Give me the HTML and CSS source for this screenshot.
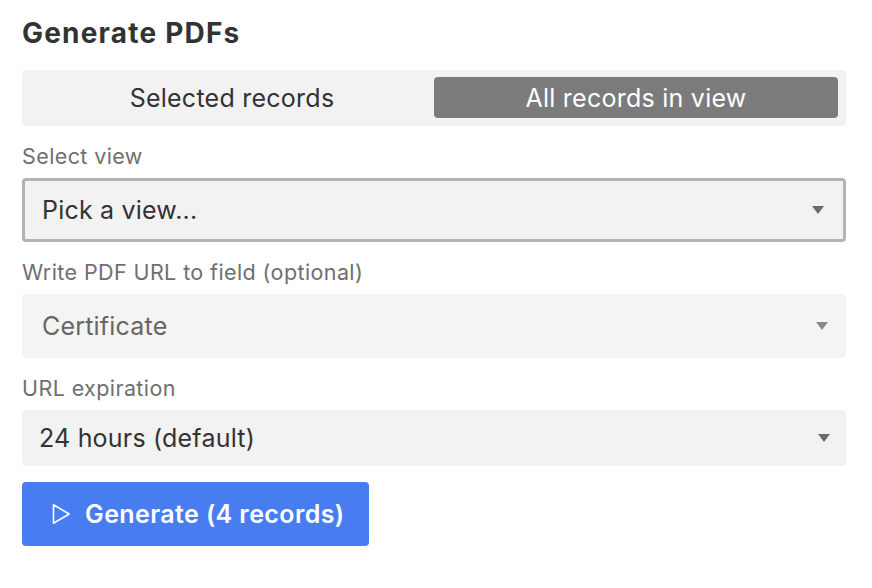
FILE: index.html
```html
<!DOCTYPE html>
<html lang="en">
<head>
<meta charset="utf-8">
<title>Generate PDFs</title>
<link rel="stylesheet" href="styles.css">
</head>
<body>
<div class="panel">
  <h1 class="title">Generate PDFs</h1>
  <div class="segmented">
    <div class="seg-option">Selected records</div>
    <div class="seg-option seg-active">All records in view</div>
  </div>

  <div class="field">
    <div class="label">Select view</div>
    <div class="select select-bordered">
      <span class="select-text">Pick a view...</span>
      <span class="caret"></span>
    </div>
  </div>

  <div class="field">
    <div class="label">Write PDF URL to field (optional)</div>
    <div class="select select-disabled">
      <span class="select-text">Certificate</span>
      <span class="caret caret-light"></span>
    </div>
  </div>

  <div class="field">
    <div class="label">URL expiration</div>
    <div class="select select-plain">
      <span class="select-text">24 hours (default)</span>
      <span class="caret"></span>
    </div>
  </div>

  <button class="generate">
    <svg class="play" width="19" height="22" viewBox="0 0 19 22" aria-hidden="true">
      <path d="M1.5 1.8 L17.2 11 L1.5 20.2 Z" fill="none" stroke="#fff" stroke-width="1.6" stroke-linejoin="round"/>
    </svg>
    <span>Generate (4 records)</span>
  </button>
</div>
</body>
</html>
```

FILE: styles.css
```css
* { box-sizing: border-box; }
html, body { margin: 0; padding: 0; background: #fff; }
body {
  font-family: Inter, "Noto Sans", "Liberation Sans", sans-serif;
  color: #333;
}
.panel {
  width: 824px;
  margin-left: 22px;
  padding-top: 17px;
  display: flex;
  flex-direction: column;
}
.title {
  margin: 0;
  font-size: 28px;
  line-height: 32px;
  font-weight: 700;
  letter-spacing: 1.2px;
  color: #333;
}
.segmented {
  margin-top: 21px;
  height: 56px;
  background: #f2f2f2;
  border-radius: 4px;
  padding: 7px 8px 8px;
  display: grid;
  grid-template-columns: 1fr 1fr;
}
.seg-option {
  display: flex;
  align-items: center;
  justify-content: center;
  font-size: 25px;
  letter-spacing: 0.25px;
  color: #333;
  border-radius: 4px;
}
.seg-active {
  background: #7b7b7b;
  color: #fff;
}
.field {
  margin-top: 18px;
  display: flex;
  flex-direction: column;
}
.label {
  font-size: 21.5px;
  line-height: 24px;
  letter-spacing: 0.4px;
  color: #6f6f6f;
  margin-bottom: 10px;
}
.select {
  display: flex;
  align-items: center;
  justify-content: space-between;
  border-radius: 4px;
  background: #f2f2f2;
  font-size: 25px;
  letter-spacing: 0.2px;
}
.select-bordered {
  height: 64px;
  border: 3px solid #b3b3b3;
  padding: 0 19px 0 17px;
  color: #333;
}
.select-disabled {
  height: 64px;
  background: #f4f4f4;
  padding: 0 18px 0 20px;
  color: #666;
}
.select-plain {
  height: 56px;
  padding: 0 16px 0 17px;
  color: #333;
}
.caret {
  width: 0;
  height: 0;
  border-left: 6px solid transparent;
  border-right: 6px solid transparent;
  border-top: 8px solid #6b6b6b;
}
.caret-light { border-top-color: #8a8a8a; }
.generate {
  margin-top: 16px;
  align-self: flex-start;
  height: 64px;
  width: 347px;
  border: 0;
  border-radius: 4px;
  background: #477df0;
  color: #fff;
  font-family: inherit;
  font-size: 25px;
  font-weight: 600;
  letter-spacing: 0.4px;
  display: flex;
  align-items: center;
  gap: 14px;
  padding: 0 0 0 30px;
  cursor: pointer;
}
.play { flex: none; }
```
